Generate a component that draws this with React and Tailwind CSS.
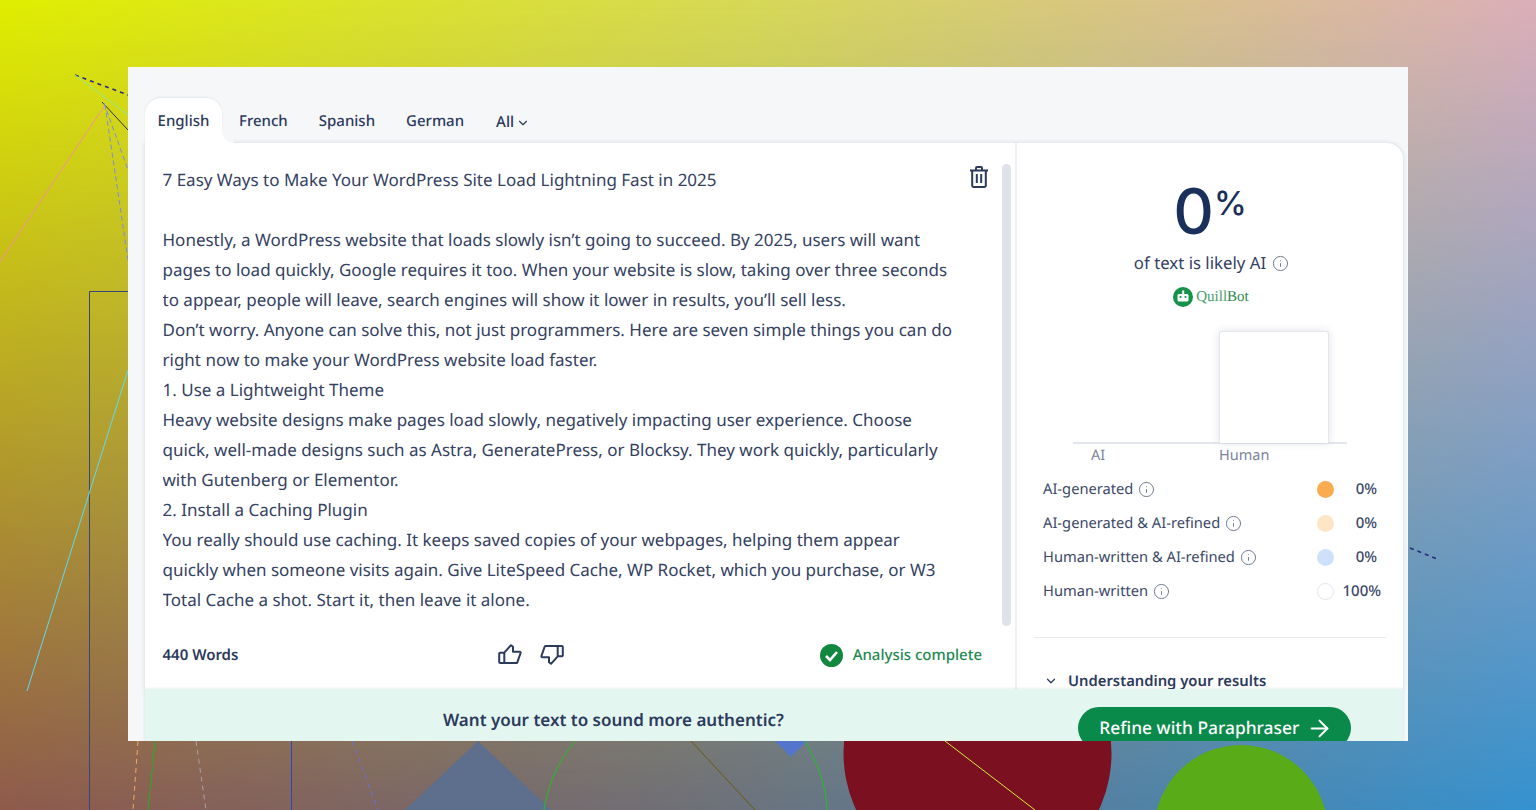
import React from "react";
import { ChevronDown, Info, ArrowRight } from "lucide-react";

const lines = [
  "Honestly, a WordPress website that loads slowly isn’t going to succeed. By 2025, users will want",
  "pages to load quickly, Google requires it too. When your website is slow, taking over three seconds",
  "to appear, people will leave, search engines will show it lower in results, you’ll sell less.",
  "Don’t worry. Anyone can solve this, not just programmers. Here are seven simple things you can do",
  "right now to make your WordPress website load faster.",
  "1. Use a Lightweight Theme",
  "Heavy website designs make pages load slowly, negatively impacting user experience. Choose",
  "quick, well-made designs such as Astra, GeneratePress, or Blocksy. They work quickly, particularly",
  "with Gutenberg or Elementor.",
  "2. Install a Caching Plugin",
  "You really should use caching. It keeps saved copies of your webpages, helping them appear",
  "quickly when someone visits again. Give LiteSpeed Cache, WP Rocket, which you purchase, or W3",
  "Total Cache a shot. Start it, then leave it alone.",
];

const legend = [
  { label: "AI-generated", value: "0%", dot: "bg-[#fbab4f]", pad: "pr-[4px]" },
  { label: "AI-generated & AI-refined", value: "0%", dot: "bg-[#fde5c5]", pad: "pr-[4px]" },
  { label: "Human-written & AI-refined", value: "0%", dot: "bg-[#cfe0fb]", pad: "pr-[4px]" },
  { label: "Human-written", value: "100%", dot: "bg-white border border-[#e3e6ea]", pad: "" },
];

function Backdrop() {
  return (
    <div className="absolute inset-0">
      <div className="absolute inset-0 bg-[linear-gradient(to_right,#8f5a4c_0%,#6f7078_45%,#3592cf_100%)]" />
      <div className="absolute inset-0 bg-[linear-gradient(to_right,#e0ee00_0%,#d6d858_50%,#dcaeb8_100%)] [mask-image:linear-gradient(to_bottom,black_0%,transparent_100%)]" />
      <svg className="absolute inset-0" width="1536" height="810" fill="none">
        <line x1="75" y1="75" x2="128" y2="95" stroke="#2a2a80" strokeWidth="1.6" strokeDasharray="4 4" />
        <line x1="75" y1="75" x2="128" y2="115" stroke="#9be88a" />
        <line x1="102" y1="102" x2="128" y2="130" stroke="#333" />
        <line x1="105" y1="105" x2="0" y2="262" stroke="#f58f9a" />
        <line x1="104" y1="103" x2="128" y2="170" stroke="#7c8ce0" strokeDasharray="5 3" />
        <line x1="105" y1="105" x2="128" y2="260" stroke="#7c8ce0" strokeDasharray="5 3" />
        <path d="M128 291.5H89.5V810" stroke="#33477a" />
        <line x1="291.5" y1="741" x2="291.5" y2="810" stroke="#2a48b0" />
        <line x1="128" y1="370" x2="27" y2="691" stroke="#62d8ee" />
        <line x1="138" y1="741" x2="133" y2="810" stroke="#f0a860" strokeDasharray="5 4" />
        <line x1="155" y1="741" x2="148" y2="810" stroke="#22b022" strokeDasharray="24 2" />
        <line x1="196" y1="741" x2="206" y2="810" stroke="#a8a0a8" strokeDasharray="5 4" />
        <line x1="352" y1="741" x2="378" y2="810" stroke="#6a70d8" strokeDasharray="5 4" />
        <polygon points="478,741 405,810 551,810" fill="#5d6f8c" />
        <path d="M544 810C549 780 560 760 575 741" stroke="#22c022" />
        <line x1="691" y1="741" x2="755" y2="810" stroke="#6a5a10" />
        <polygon points="775,741 791,757 807,741" fill="#5575cc" />
        <path d="M805 741C818 765 826 785 827 810" stroke="#22c022" />
        <circle cx="977.5" cy="753" r="134" fill="#7a1020" />
        <line x1="945" y1="741" x2="1035" y2="810" stroke="#d8e840" />
        <circle cx="1241" cy="832" r="87" fill="#5aab18" />
        <line x1="1410" y1="548" x2="1437" y2="559" stroke="#2a2a80" strokeWidth="1.6" strokeDasharray="4 4" />
      </svg>
    </div>
  );
}

function Thumb({ down }) {
  return (
    <svg width="24" height="24" viewBox="0 0 24 24" fill="none" stroke="#2c3a5c" strokeWidth="2" strokeLinejoin="round" className={down ? "rotate-180 -translate-y-px" : ""}>
      <path d="M1.2 10.7A1 1 0 0 1 2.2 9.7H6.3L13 2.2L15 3.7V8.7H21.5A1 1 0 0 1 22.6 10L19.4 19.2A1 1 0 0 1 18.4 20H2.2A1 1 0 0 1 1.2 19ZM6.3 9.7V20" />
    </svg>
  );
}

function InfoIcon() {
  return <Info size={17} strokeWidth={1.4} className="text-[#6f7a8f] shrink-0" />;
}

export default function App() {
  return (
    <div className="relative h-[810px] w-[1536px] overflow-hidden font-['Noto_Sans',sans-serif] text-[#2c3a5c] [text-rendering:geometricPrecision]">
      <Backdrop />
      <div className="relative ml-[128px] mt-0 pt-[67px]">
        <div className="flex h-[674px] w-[1280px] flex-col overflow-hidden bg-[#f5f7f9] pl-[17px] pr-[5px]">
          <nav className="flex h-[76px] shrink-0 items-end text-[15px] font-medium">
            <div className="relative flex h-[45px] w-[77px] items-center justify-center rounded-t-[16px] bg-white pt-[2px] shadow-[0_-1px_2px_rgba(30,50,90,0.08)]">
              English
              <div className="absolute bottom-0 left-full h-[12px] w-[12px] bg-white">
                <div className="h-full w-full rounded-bl-[12px] bg-[#f5f7f9]" />
              </div>
            </div>
            <div className="flex h-[45px] items-center pl-[17px] pr-[15px] pt-[2px]">French</div>
            <div className="flex h-[45px] items-center pl-[16px] pr-[15px] pt-[2px]">Spanish</div>
            <div className="flex h-[45px] items-center pl-[16px] pr-[15px] pt-[2px]">German</div>
            <div className="flex h-[45px] items-center gap-[2px] pl-[17px] pt-[4px] font-medium">
              All <ChevronDown size={14} strokeWidth={2} />
            </div>
          </nav>
          <main className="flex h-[546px] shrink-0 rounded-tr-[16px] bg-white shadow-[0_0_4px_rgba(30,50,90,0.16)]">
            <section className="flex w-[872px] shrink-0 flex-col border-r-2 border-[#eef0f3]">
              <div className="flex h-[488px] shrink-0 pl-[17.5px] pr-[4px]">
                <div className="flex-1 overflow-hidden pt-[22px] text-[17px] leading-[30px] text-[#34415f]">
                  <div className="flex items-start justify-between">
                    <div className="whitespace-nowrap">7 Easy Ways to Make Your WordPress Site Load Lightning Fast in 2025</div>
                    <svg width="20" height="22" viewBox="0 0 20 22" fill="none" stroke="#2c3a5c" strokeWidth="2" className="mt-[1px]">
                      <path d="M1 4.5H19M7 4.5V2A1 1 0 0 1 8 1H12A1 1 0 0 1 13 2V4.5M3.2 4.5V19.5A1.5 1.5 0 0 0 4.7 21H15.3A1.5 1.5 0 0 0 16.8 19.5V4.5" />
                      <path d="M7.8 8V17M12.2 8V17" />
                    </svg>
                  </div>
                  <div className="mt-[30px]">
                    {lines.map((l) => (
                      <div key={l} className="whitespace-nowrap">{l}</div>
                    ))}
                  </div>
                </div>
                <div className="ml-[13px] mt-[21px] h-[462px] w-[9px] shrink-0 rounded-full bg-[#dfe3e9]" />
              </div>
              <div className="flex flex-1 items-center pb-[10px] pl-[17.5px] pr-[33px]">
                <div className="whitespace-nowrap text-[15px] font-semibold">440 Words</div>
                <div className="ml-[260px] flex gap-[18px]">
                  <Thumb />
                  <Thumb down />
                </div>
                <div className="ml-auto flex items-center gap-[10px] whitespace-nowrap text-[15px] font-medium text-[#1f8a50]">
                  <svg width="23" height="23" viewBox="0 0 23 23" className="-ml-px">
                    <circle cx="11.5" cy="11.5" r="11.5" fill="#12873f" />
                    <path d="M6 12L10 16L17 8" fill="none" stroke="#fff" strokeWidth="2.6" />
                  </svg>
                  Analysis complete
                </div>
              </div>
            </section>
            <aside className="flex min-w-0 flex-1 flex-col overflow-hidden px-[17px]">
              <div className="mt-[31px] flex h-[70px] justify-center font-['Inter',sans-serif] text-[#1a2f5a]">
                <span className="text-[63px] font-[550] leading-[76px]">0</span>
                <span className="text-[33px] font-medium leading-[58px]">%</span>
              </div>
              <div className="mt-[4px] ml-[3px] flex items-center justify-center gap-[6px] text-[16.8px] leading-[30px] text-[#34415f]">
                of text is likely AI <InfoIcon />
              </div>
              <div className="ml-[2px] mt-[9px] flex items-center justify-center gap-[3px]">
                <svg width="20" height="20" viewBox="0 0 20 20">
                  <circle cx="10" cy="10" r="10" fill="#14924a" />
                  <rect x="4.5" y="7" width="11" height="7.5" rx="1.5" fill="#fff" />
                  <rect x="9.2" y="3.5" width="2" height="3.5" fill="#fff" />
                  <circle cx="7.5" cy="10" r="1.1" fill="#14924a" />
                  <circle cx="12.5" cy="10" r="1.1" fill="#14924a" />
                </svg>
                <span className="font-['Liberation_Serif',serif] text-[15px] leading-[20px] text-[#4aa06c]">
                  Quill<span className="text-[#2b8a52]">Bot</span>
                </span>
              </div>
              <div className="relative mx-[39px] mt-[24px] h-[113px] shrink-0 border-b-2 border-[#e3e6ec]">
                <div className="ml-[146px] mt-0 h-[112px] w-[110px] rounded-t-[3px] border border-b-0 border-[#e4e6ec] bg-white shadow-[0_0_8px_rgba(30,50,90,0.14)]" />
              </div>
              <div className="ml-[57px] mt-[1px] flex text-[14.5px] leading-[20px] text-[#7b8499]">
                <span className="w-[128px]">AI</span>
                <span>Human</span>
              </div>
              <div className="mt-[7px] flex flex-col pl-[9px] pr-[5px] text-[14.7px] text-[#3c4966]">
                {legend.map((r) => (
                  <div key={r.label} className="flex h-[34px] items-center">
                    <span className="mr-[5px] whitespace-nowrap">{r.label}</span>
                    <InfoIcon />
                    <span className={`ml-auto h-[17px] w-[17px] rounded-full ${r.dot}`} />
                    <span className={`w-[47px] text-right text-[15px] font-medium ${r.pad}`}>{r.value}</span>
                  </div>
                ))}
              </div>
              <div className="mt-[29px] h-px shrink-0 bg-[#e6e8ec]" />
              <div className="mt-[35px] flex items-center gap-[10px] pl-[10px] text-[14.8px] font-semibold leading-[16px]">
                <ChevronDown size={14} strokeWidth={2.2} />
                Understanding your results
              </div>
            </aside>
          </main>
          <div className="relative flex h-[52px] shrink-0 items-start bg-[#e3f6ef] shadow-[0_0_3px_rgba(30,50,90,0.14)]">
            <div className="ml-[298px] mt-[18px] whitespace-nowrap text-[17px] font-semibold leading-[26px]">Want your text to sound more authentic?</div>
            <div className="ml-[294px] mt-[18px] flex h-[42px] w-[273px] shrink-0 items-center justify-center gap-[7px] rounded-full bg-[#0a8a4a] pl-[4px] text-[17.4px] font-medium text-white">
              Refine with Paraphraser <ArrowRight size={27} strokeWidth={1.8} />
            </div>
          </div>
        </div>
      </div>
    </div>
  );
}
